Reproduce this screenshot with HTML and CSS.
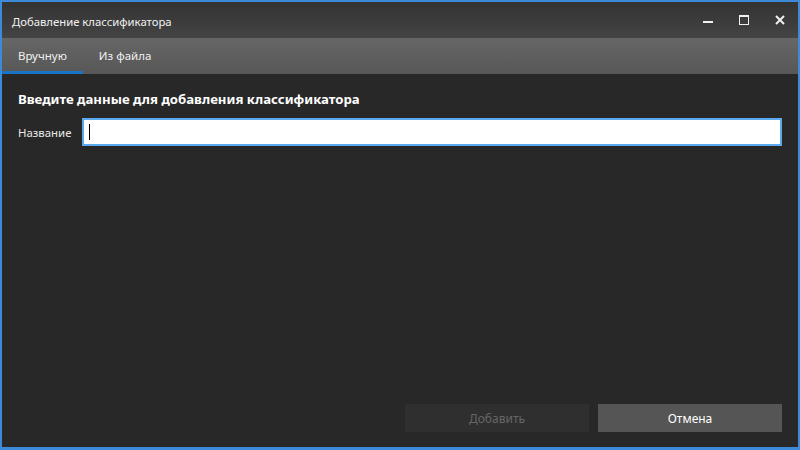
FILE: index.html
```html
<!DOCTYPE html>
<html lang="ru">
  <head>
    <meta charset="UTF-8" />
    <title>Добавление классификатора</title>
    <link rel="stylesheet" href="styles.css">
  </head>
  <body>
    <div class="window">
      <div class="titlebar">
        <span class="title">Добавление классификатора</span>
        <div class="controls">
          <span class="ctl">
            <svg width="10" height="10" viewBox="0 0 10 10"><rect x="0" y="6" width="10" height="2" fill="#f0f0f0"/></svg>
          </span>
          <span class="ctl">
            <svg width="10" height="10" viewBox="0 0 10 10"><rect x="0.5" y="0.5" width="9" height="9" fill="none" stroke="#f0f0f0"/><rect x="0" y="0" width="10" height="2" fill="#f0f0f0"/></svg>
          </span>
          <span class="ctl">
            <svg width="10" height="10" viewBox="0 0 10 10"><path d="M1 1 L9 9 M9 1 L1 9" stroke="#f0f0f0" stroke-width="2"/></svg>
          </span>
        </div>
      </div>

      <div class="tabs">
        <div class="tab active">Вручную</div>
        <div class="tab">Из файла</div>
      </div>

      <div class="content">
        <h1>Введите данные для добавления классификатора</h1>
        <div class="form-row">
          <label for="name">Название</label>
          <div class="input"><span class="caret"></span></div>
        </div>
        <div class="spacer"></div>
        <div class="buttons">
          <button class="btn disabled">Добавить</button>
          <button class="btn cancel">Отмена</button>
        </div>
      </div>
    </div>
  </body>
</html>
```

FILE: styles.css
```css
html,
body {
  margin: 0;
  padding: 0;
  height: 100%;
}
body {
  font-family: "Noto Sans", "Open Sans", Arial, sans-serif;
  background: #3d8ad6;
}
.window {
  box-sizing: border-box;
  height: 450px;
  border: 2px solid #3d8ad6;
  border-bottom-width: 3px;
  display: flex;
  flex-direction: column;
  background: #282828;
}
.titlebar {
  height: 36px;
  flex: none;
  display: flex;
  align-items: center;
  justify-content: space-between;
  background: linear-gradient(#333333, #444444);
  color: #f2f2f2;
  font-size: 11.3px;
  padding-left: 10px;
}
.title {
  padding-top: 2px;
}
.controls {
  display: flex;
  height: 100%;
}
.ctl {
  width: 36px;
  display: flex;
  align-items: center;
  justify-content: center;
}
.tabs {
  height: 36px;
  flex: none;
  display: flex;
  background: linear-gradient(#666666, #575757);
}
.tab {
  box-sizing: border-box;
  height: 36px;
  padding: 0 16px;
  display: flex;
  align-items: center;
  color: #f0f0f0;
  font-size: 11.5px;
  border-bottom: 3px solid transparent;
  padding-top: 2px;
}
.tab.active {
  border-bottom-color: #1a73c4;
}
.content {
  flex: 1;
  display: flex;
  flex-direction: column;
  padding: 16px 16px 15px 16px;
}
h1 {
  margin: 0 0 10px 0;
  font-size: 13.2px;
  font-weight: bold;
  color: #ffffff;
}
.form-row {
  display: flex;
  align-items: center;
  gap: 11px;
}
label {
  color: #e8e8e8;
  font-size: 11.4px;
}
.input {
  flex: 1;
  height: 24px;
  background: #ffffff;
  border: 2px solid #5aaaf0;
  display: flex;
  align-items: center;
  padding-left: 5px;
}
.caret {
  width: 1px;
  height: 16px;
  background: #000000;
}
.spacer {
  flex: 1;
}
.buttons {
  display: flex;
  justify-content: flex-end;
  gap: 9px;
}
.btn {
  width: 184px;
  height: 28px;
  border: none;
  font-family: inherit;
  font-size: 12px;
}
.btn.disabled {
  background: #2f2f2f;
  color: #666666;
}
.btn.cancel {
  background: #555555;
  color: #ffffff;
}
```
